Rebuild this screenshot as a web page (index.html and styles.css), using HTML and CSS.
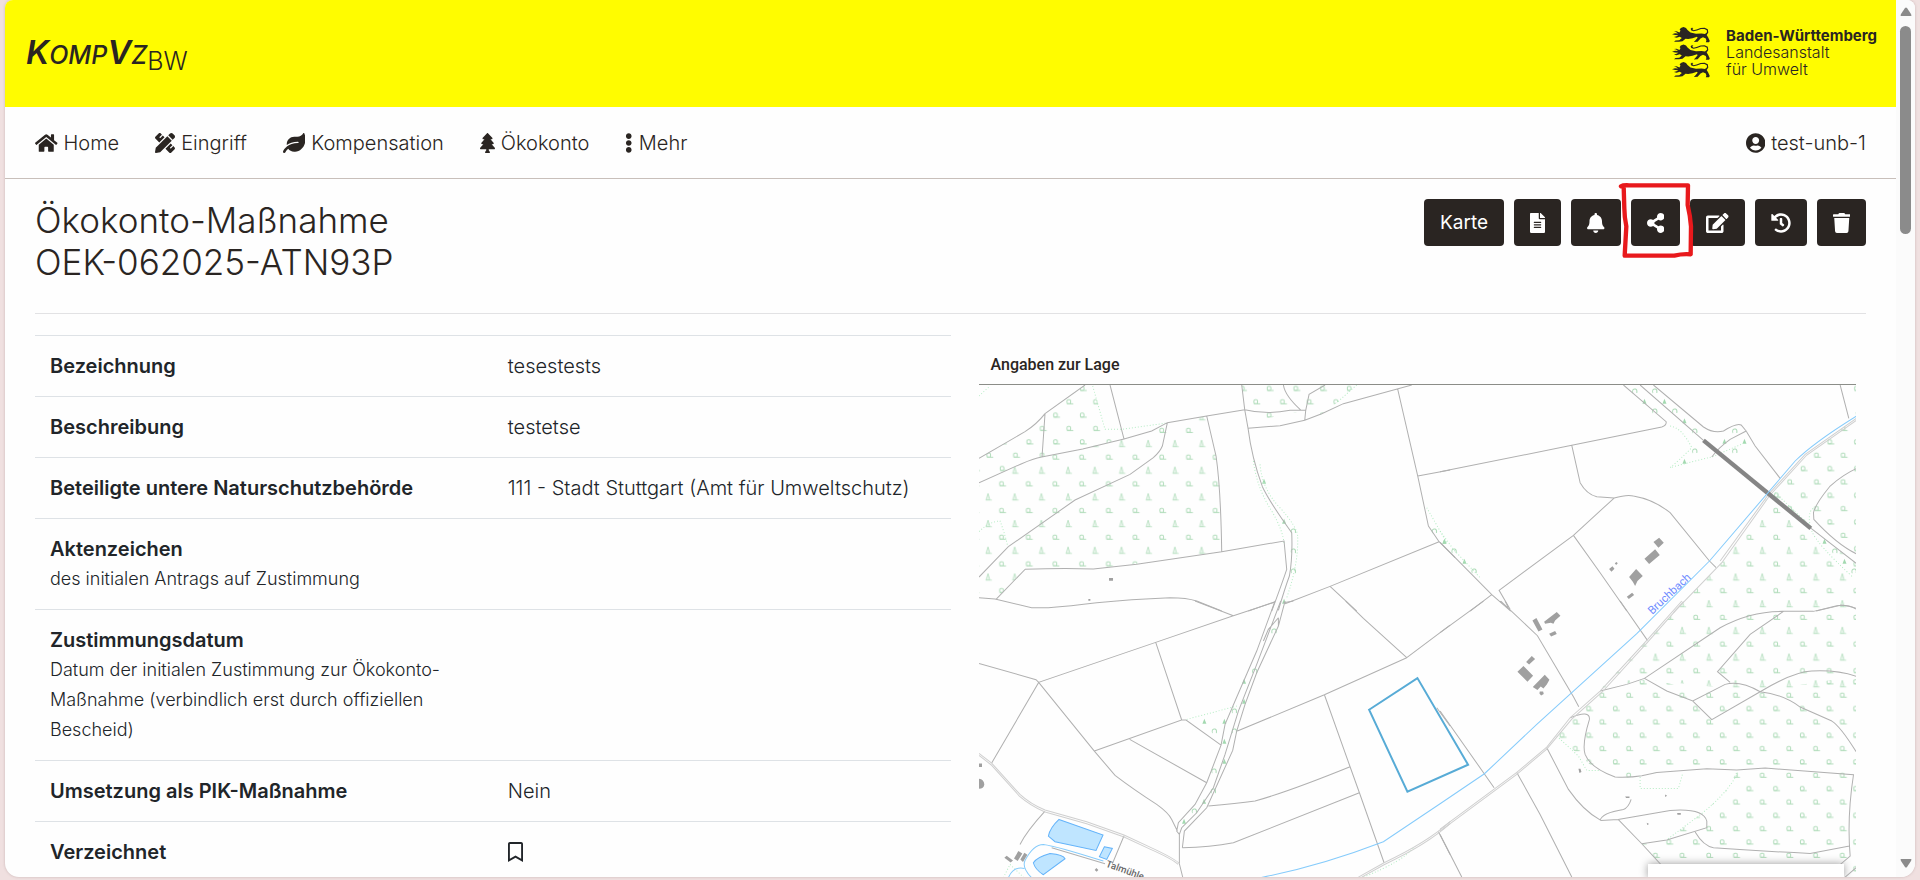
FILE: index.html
```html
<!DOCTYPE html>
<html lang="de">
<head>
<meta charset="utf-8">
<meta name="viewport" content="width=device-width, initial-scale=1">
<title>KompVzBW – Ökokonto-Maßnahme</title>
<link rel="stylesheet" href="styles.css">
</head>
<body>
<div class="frame">
  <div class="page">
    <header class="brand-bar">
      <a class="brand" href="#"><span class="brand-name">K<span class="caps">omp</span>V<span class="caps">z</span></span><span class="brand-sub">BW</span></a>
      <a class="agency" href="#">
        <svg class="lions" viewBox="0 0 38 51" aria-hidden="true">
          <defs>
            <path id="lion" d="M0 7.200 3 6.200 6 6.600 4 5 2 4.600 4.500 4.200 7.500 5.400 8.500 3.600 7.600 2.800 8.800 1 11.500 0 14 .9 15.500 3 18.500 5.600 24 6.800 29.500 6.500 33 7 35 5.200 34.800 3.200 32.500 2 29 2 25 3.600 21.600 4.300 19.300 3.500 18.600 1.700 19.800 .7 21.400 .9 20.300 2 21.500 3.200 24.500 2.600 28.500 1 32.600.8 35.800 2.300 36.300 5.500 34.700 8 36.200 10.500 37.800 14 37 15.300 33.800 15.200 34.400 13.600 33.800 11.500 31 10.200 28.500 11.600 25.600 14.800 21.800 15 23.300 13.400 25.600 10.800 25 9.800 20.500 11.200 16.200 12 13.500 11.800 10.500 14.300 7 14.800 2 14.800 3.500 13.500 7.300 13.200 9.800 11 7.800 9.700 4.500 10.700 2 9.900 4.500 9.200 6.400 8.300 3.200 8Z"/>
          </defs>
          <use href="#lion"/><use href="#lion" y="17.500"/><use href="#lion" y="35"/>
        </svg>
        <span class="agency-text"><strong>Baden-Württemberg</strong><br>Landesanstalt<br>für Umwelt</span>
      </a>
    </header>

    <nav class="nav">
      <a class="nav-item" href="#"><svg class="icon" viewBox="0 0 576 512"><path d="M280.370 148.260L96 300.110V464a16 16 0 0 0 16 16l112.060-.29a16 16 0 0 0 15.920-16V368a16 16 0 0 1 16-16h64a16 16 0 0 1 16 16v95.640a16 16 0 0 0 16 16.050L464 480a16 16 0 0 0 16-16V300L295.670 148.260a12.190 12.190 0 0 0-15.300 0zM571.600 251.470L488 182.560V44.050a12 12 0 0 0-12-12h-56a12 12 0 0 0-12 12v72.610L318.470 43a48 48 0 0 0-61 0L4.340 251.470a12 12 0 0 0-1.600 16.900l25.500 31A12 12 0 0 0 45.150 301l235.220-193.740a12.190 12.190 0 0 1 15.300 0L530.900 301a12 12 0 0 0 16.900-1.600l25.500-31a12 12 0 0 0-1.700-16.930z"/></svg>Home</a>
      <a class="nav-item" href="#"><svg class="icon" viewBox="0 0 512 512"><path d="M109.460 244.040l134.580-134.560-44.120-44.120-61.680 61.680a7.919 7.919 0 0 1-11.210 0l-11.210-11.210c-3.100-3.100-3.100-8.120 0-11.210l61.680-61.680-33.640-33.650C131.470-3.100 111.390-3.100 99 9.290L9.290 99c-12.380 12.390-12.390 32.470 0 44.860l100.170 100.180zm388.470-116.800c18.760-18.760 18.750-49.170 0-67.930l-45.250-45.250c-18.760-18.760-49.180-18.760-67.950 0l-46.020 46.010 113.200 113.200 46.020-46.030zM316.080 82.710l-297 296.960L.32 487.110c-2.530 14.490 10.090 27.110 24.590 24.560l107.450-18.840L429.280 195.900 316.080 82.710zm186.630 285.430l-33.640-33.640-61.680 61.680c-3.100 3.100-8.120 3.100-11.210 0l-11.210-11.210c-3.090-3.100-3.090-8.120 0-11.210l61.680-61.680-44.140-44.140L267.930 402.500l100.210 100.200c12.390 12.390 32.470 12.390 44.860 0l89.710-89.700c12.390-12.390 12.390-32.470 0-44.860z"/></svg>Eingriff</a>
      <a class="nav-item" href="#"><svg class="icon" viewBox="0 0 576 512"><path d="M546.200 9.700c-5.600-12.500-21.600-13-28.300-1.200C486.900 62.400 431.400 96 368 96h-80C182 96 96 182 96 288c0 7 .8 13.700 1.500 20.500C161.300 262.800 253.400 224 384 224c8.800 0 16 7.200 16 16s-7.200 16-16 16C132.600 256 26 410.100 2.400 468c-6.600 16.300 1.200 34.900 17.500 41.600 16.400 6.800 35-1.100 41.800-17.300 1.500-3.600 20.900-47.900 71.900-90.600 32.400 43.900 94 85.800 174.900 77.200C465.500 467.500 576 326.700 576 154.300c0-50.200-10.800-102.200-29.800-144.600z"/></svg>Kompensation</a>
      <a class="nav-item" href="#"><svg class="icon" viewBox="0 0 384 512"><path d="M378.310 378.490L298.420 288h30.630c9.010 0 16.980-5 20.780-13.060 3.800-8.040 2.550-17.260-3.280-24.050L268.420 160h28.890c9.100 0 17.300-5.350 20.860-13.610 3.520-8.130 1.860-17.590-4.240-24.080L203.660 4.830c-6.030-6.450-17.280-6.450-23.320 0L70.060 122.310c-6.100 6.490-7.750 15.950-4.240 24.080C69.380 154.650 77.590 160 86.690 160h28.890l-78.140 90.910c-5.810 6.780-7.060 15.990-3.270 24.040C37.970 283 45.930 288 54.950 288h30.630L5.690 378.490c-6 6.790-7.360 16.090-3.560 24.260 3.750 8.050 12 13.250 21.010 13.250H160v24.450l-30.290 48.400c-5.320 10.640 2.420 23.160 14.310 23.160h95.960c11.890 0 19.630-12.520 14.310-23.160L224 440.450V416h136.860c9.010 0 17.260-5.200 21.010-13.250 3.800-8.170 2.440-17.470-3.560-24.260z"/></svg>Ökokonto</a>
      <a class="nav-item" href="#"><svg class="icon" viewBox="0 0 192 512"><path d="M96 184c39.800 0 72 32.200 72 72s-32.200 72-72 72-72-32.200-72-72 32.200-72 72-72zM24 80c0 39.800 32.200 72 72 72s72-32.200 72-72S135.800 8 96 8 24 40.200 24 80zm0 352c0 39.800 32.200 72 72 72s72-32.200 72-72-32.200-72-72-72-72 32.200-72 72z"/></svg>Mehr</a>
      <a class="nav-item nav-user" href="#"><svg class="icon" viewBox="0 0 496 512"><path d="M248 8C111 8 0 119 0 256s111 248 248 248 248-111 248-248S385 8 248 8zm0 96c48.600 0 88 39.400 88 88s-39.400 88-88 88-88-39.400-88-88 39.400-88 88-88zm0 344c-58.700 0-111.300-26.600-146.500-68.200 18.800-35.400 55.600-59.800 98.500-59.800 2.400 0 4.800.4 7.100 1.100 13 4.200 26.600 6.900 40.900 6.900 14.300 0 28-2.700 40.900-6.900 2.300-.7 4.700-1.100 7.100-1.100 42.900 0 79.700 24.400 98.500 59.800C359.300 421.400 306.700 448 248 448z"/></svg>test-unb-1</a>
    </nav>

    <main class="content">
      <div class="title-row">
        <h1 class="title">Ökokonto-Maßnahme<br>OEK-062025-ATN93P</h1>
        <div class="actions">
          <button class="btn" type="button">Karte</button>
          <button class="btn" type="button" aria-label="Bericht"><svg class="icon" viewBox="0 0 384 512"><path d="M224 136V0H24C10.700 0 0 10.700 0 24v464c0 13.300 10.700 24 24 24h336c13.300 0 24-10.700 24-24V160H248c-13.200 0-24-10.800-24-24zm64 236c0 6.600-5.400 12-12 12H108c-6.600 0-12-5.400-12-12v-8c0-6.600 5.400-12 12-12h168c6.600 0 12 5.400 12 12v8zm0-64c0 6.600-5.400 12-12 12H108c-6.600 0-12-5.400-12-12v-8c0-6.600 5.400-12 12-12h168c6.600 0 12 5.400 12 12v8zm0-72v8c0 6.600-5.400 12-12 12H108c-6.600 0-12-5.400-12-12v-8c0-6.600 5.400-12 12-12h168c6.600 0 12 5.400 12 12zm96-114.100v6.100H256V0h6.100c6.400 0 12.500 2.500 17 7l97.900 98c4.500 4.500 7 10.600 7 16.900z"/></svg></button>
          <button class="btn" type="button" aria-label="Abonnieren"><svg class="icon" viewBox="0 0 448 512"><path d="M224 512c35.320 0 63.970-28.650 63.970-64H160.030c0 35.350 28.650 64 63.970 64zm215.390-149.710c-19.320-20.760-55.470-51.990-55.470-154.290 0-77.700-54.480-139.900-127.940-155.160V32c0-17.670-14.320-32-31.980-32s-31.980 14.330-31.980 32v20.840C118.560 68.100 64.080 130.300 64.080 208c0 102.300-36.150 133.530-55.470 154.290-6 6.450-8.660 14.160-8.610 21.710.11 16.400 12.980 32 32.100 32h383.800c19.120 0 32-15.600 32.100-32 .05-7.550-2.610-15.270-8.610-21.710z"/></svg></button>
          <div class="marked">
            <button class="btn" type="button" aria-label="Teilen"><svg class="icon" viewBox="0 0 448 512"><path d="M352 320c-22.608 0-43.387 7.819-59.790 20.895l-102.486-64.054a96.551 96.551 0 0 0 0-41.683l102.486-64.054C308.613 184.181 329.392 192 352 192c53.019 0 96-42.981 96-96S405.019 0 352 0s-96 42.981-96 96c0 7.158.79 14.130 2.276 20.841L155.790 180.895C139.387 167.819 118.608 160 96 160c-53.019 0-96 42.981-96 96s42.981 96 96 96c22.608 0 43.387-7.819 59.790-20.895l102.486 64.054A96.301 96.301 0 0 0 256 416c0 53.019 42.981 96 96 96s96-42.981 96-96-42.981-96-96-96z"/></svg></button>
            <svg class="mark" viewBox="0 0 216 228" aria-hidden="true"><path d="M6 10Q12 6 30 7H207L206 66Q214 100 216 130L215 214Q190 212 166 218H17L22 130Q16 100 16 76L14 10"/></svg>
          </div>
          <button class="btn" type="button" aria-label="Bearbeiten"><svg class="icon" viewBox="0 0 576 512"><path d="M402.600 83.200l90.200 90.200c3.800 3.800 3.800 10 0 13.800L274.400 405.600l-92.800 10.300c-12.400 1.400-22.900-9.100-21.500-21.500l10.300-92.800L388.800 83.200c3.800-3.800 10-3.800 13.800 0zm162-22.900l-48.800-48.800c-15.200-15.200-39.900-15.200-55.200 0l-35.400 35.400c-3.800 3.800-3.800 10 0 13.800l90.200 90.200c3.800 3.800 10 3.800 13.800 0l35.400-35.400c15.200-15.300 15.200-40 0-55.200zM384 346.200V448H64V128h229.800c3.200 0 6.200-1.300 8.500-3.500l40-40c7.600-7.600 2.200-20.500-8.500-20.500H48C21.500 64 0 85.500 0 112v352c0 26.500 21.500 48 48 48h352c26.500 0 48-21.500 48-48V306.200c0-10.700-12.900-16-20.500-8.500l-40 40c-2.200 2.300-3.500 5.300-3.500 8.500z"/></svg></button>
          <button class="btn" type="button" aria-label="Verlauf"><svg class="icon" viewBox="0 0 512 512"><path d="M504 255.531c.253 136.640-111.180 248.372-247.820 248.468-59.015.042-113.223-20.530-155.822-54.911-11.077-8.940-11.905-25.541-1.839-35.607l11.267-11.267c8.609-8.609 22.353-9.551 31.891-1.984C173.062 425.135 212.781 440 256 440c101.705 0 184-82.311 184-184 0-101.705-82.311-184-184-184-48.814 0-93.149 18.969-126.068 49.932l50.754 50.754c10.080 10.080 2.941 27.314-11.313 27.314H24c-8.837 0-16-7.163-16-16V38.627c0-14.254 17.234-21.393 27.314-11.314l49.372 49.372C129.209 34.136 189.552 8 256 8c136.810 0 247.747 110.780 248 247.531zm-180.912 78.784l9.823-12.630c8.138-10.463 6.253-25.542-4.210-33.679L288 256.349V152c0-13.255-10.745-24-24-24h-16c-13.255 0-24 10.745-24 24v135.651l65.409 50.874c10.463 8.137 25.541 6.253 33.679-4.210z"/></svg></button>
          <button class="btn" type="button" aria-label="Löschen"><svg class="icon" viewBox="0 0 448 512"><path d="M432 32H312l-9.400-18.700A24 24 0 0 0 281.100 0H166.800a23.720 23.720 0 0 0-21.400 13.300L136 32H16A16 16 0 0 0 0 48v32a16 16 0 0 0 16 16h416a16 16 0 0 0 16-16V48a16 16 0 0 0-16-16zM53.200 467a48 48 0 0 0 47.900 45h245.800a48 48 0 0 0 47.900-45L416 128H32z"/></svg></button>
        </div>
      </div>

      <div class="columns">
        <table class="details">
          <tbody>
            <tr><th scope="row">Bezeichnung</th><td>tesestests</td></tr>
            <tr><th scope="row">Beschreibung</th><td>testetse</td></tr>
            <tr><th scope="row">Beteiligte untere Naturschutzbehörde</th><td>111 - Stadt Stuttgart (Amt für Umweltschutz)</td></tr>
            <tr><th scope="row">Aktenzeichen<small>des initialen Antrags auf Zustimmung</small></th><td></td></tr>
            <tr><th scope="row">Zustimmungsdatum<small>Datum der initialen Zustimmung zur Ökokonto-Maßnahme (verbindlich erst durch offiziellen Bescheid)</small></th><td></td></tr>
            <tr><th scope="row">Umsetzung als PIK-Maßnahme</th><td>Nein</td></tr>
            <tr><th scope="row">Verzeichnet</th><td><svg class="icon" viewBox="0 0 384 512"><path d="M336 0H48C21.490 0 0 21.490 0 48v464l192-112 192 112V48c0-26.510-21.490-48-48-48zm0 428.430l-144-84-144 84V54a6 6 0 0 1 6-6h276c3.314 0 6 2.683 6 5.996V428.430z"/></svg></td></tr>
          </tbody>
        </table>

        <section class="location">
          <h2 class="location-title">Angaben zur Lage</h2>
          <div class="map">
            <svg class="map-canvas" viewBox="27 162 2632 1480" role="img" aria-label="Karte">
              <defs>
                <g id="leafy"><rect x="-7" y="-6" width="11" height="12" rx="4"/><path d="M-7 6.500H12"/></g>
                <g id="conifer"><path d="M-6 8 0-11 6 8ZM0-8V6"/><path d="M-7 9H12"/></g>
                <g id="arch"><path d="M-5 6Q-8 5-6-3-3-7 2-6 8-4 6 6"/></g>
                <path id="spruce" d="M-6 6 0-9 6 6Z"/>
                <pattern id="mixed" patternUnits="userSpaceOnUse" x="33" y="398" width="80.080" height="80.080"><use href="#leafy" x="63" y="60"/><use href="#conifer" x="21" y="20"/></pattern>
                <pattern id="leafN" patternUnits="userSpaceOnUse" x="318" y="152" width="80.080" height="80.080"><use href="#leafy" x="20" y="20"/><use href="#leafy" x="60" y="60"/></pattern>
                <pattern id="leafS" patternUnits="userSpaceOnUse" x="1837" y="1112" width="80.080" height="80.080"><use href="#leafy" x="20" y="20"/><use href="#leafy" x="60" y="60"/></pattern>
              </defs>

              <g>
                <path fill="url(#leafN)" d="M345 162H368L405 295 455 300 462 324 338 352 215 378 155 398 27 455V382L165 302 225 248Z"/>
                <path fill="url(#mixed)" d="M462 324 592 275 710 255 738 375 754 490 755 662 500 698 370 714 165 715 78 805 27 800V455L155 398 215 378 338 352Z"/>
                <path fill="url(#leafN)" d="M815 162H1160L1100 215 1055 250 1005 268 1007 238 950 250 890 262 824 236Z"/>
                <path fill="url(#leafN)" d="M2640 162H2659V690L2522 590 2400 485 2510 362 2659 262Z"/>
                <path fill="url(#mixed)" d="M2395 492 2522 590 2659 697V1072L2370 1078 2170 1062 2030 1044 1890 1076 2030 928 2130 825 2260 690Z"/>
                <path fill="url(#leafS)" d="M1890 1078 2030 1044 2170 1072 2370 1080 2659 1035V1641H2610L2610 1602H2075L2015 1538 2090 1528 2185 1455 2260 1390 2303 1317 2210 1313 2060 1324 1970 1340 1935 1338 1860 1300 1760 1215 1800 1150Z"/>
              </g>

              <g class="symbols">
                <g transform="translate(1410 0)">
                  <use href="#arch" x="584" y="180"/><use href="#arch" x="644" y="180"/><use href="#arch" x="644" y="240"/><use href="#arch" x="704" y="240"/><use href="#arch" x="764" y="300"/><use href="#arch" x="884" y="300"/><use href="#arch" x="764" y="360"/><use href="#arch" x="884" y="360"/><use href="#arch" x="1184" y="660"/><use href="#arch" x="1242" y="720"/><use href="#arch" x="42" y="660"/><use href="#arch" x="102" y="720"/>
                  <use href="#spruce" x="613" y="212"/><use href="#spruce" x="673" y="212"/><use href="#spruce" x="733" y="271"/><use href="#spruce" x="853" y="332"/><use href="#spruce" x="913" y="332"/><use href="#spruce" x="733" y="392"/><use href="#spruce" x="1153" y="632"/><use href="#spruce" x="1213" y="692"/><use href="#spruce" x="13" y="632"/><use href="#spruce" x="73" y="692"/>
                </g>
                <use href="#arch" x="970" y="600"/><use href="#arch" x="970" y="660"/><use href="#arch" x="970" y="720"/><use href="#arch" x="1393" y="600"/><use href="#spruce" x="942" y="572"/><use href="#spruce" x="882" y="452"/><use href="#spruce" x="942" y="812"/><use href="#spruce" x="1423" y="632"/>
                <g transform="translate(0 810)">
                  <use href="#arch" x="912" y="90"/><use href="#arch" x="854" y="210"/><use href="#arch" x="793" y="330"/><use href="#arch" x="793" y="390"/><use href="#arch" x="733" y="390"/><use href="#arch" x="732" y="510"/><use href="#arch" x="730" y="570"/><use href="#arch" x="673" y="630"/>
                  <use href="#spruce" x="822" y="242"/><use href="#spruce" x="822" y="302"/><use href="#spruce" x="703" y="362"/><use href="#spruce" x="763" y="362"/><use href="#spruce" x="763" y="422"/><use href="#spruce" x="763" y="482"/><use href="#spruce" x="702" y="602"/><use href="#spruce" x="642" y="662"/>
                </g>
              </g>

              <g class="dotted">
                <path d="M27 195 60 165M368 165 405 295H455L590 276M27 602Q60 570 90 570 102 600 113 645M850 390Q860 470 905 540 940 600 942 640M870 400Q875 470 925 525 985 590 983 620 985 700 950 800M1160 162 1100 215M1370 530 1430 635"/>
                <path transform="translate(1410 0)" d="M690 285Q725 290 755 350 720 385 690 410 760 390 815 378L915 335M1005 485 1110 585Q1100 530 1130 530M1115 600Q1130 640 1240 740M0 600 40 655 120 740"/>
                <path transform="translate(0 810)" d="M650 355 800 315M100 830 120 790 160 828M1180 828Q1300 780 1330 740"/>
                <path transform="translate(1410 810)" d="M350 405 415 465 440 508H480M600 528V562H715L728 516M893 515Q860 580 775 645L680 716"/>
              </g>

              <g class="parcels">
                <path d="M345 162 225 248Q200 280 165 302L27 382M225 248 216 378M420 162 462 324M27 455 155 398Q190 383 215 378L338 354 462 324 545 300 592 275 710 255 824 236Q890 252 960 238L1007 238 1004 268M592 275 577 345Q570 362 550 380L480 430 315 507 115 647 27 738M710 255 738 375Q752 470 755 662M78 805 165 715Q280 710 370 714L500 700 755 662 942 630 950 715Q935 760 905 840M27 800 75 804 185 830H235Q300 825 380 815 480 805 600 800 650 800 680 810L755 840M815 162 824 236 834 292Q845 380 877 467 900 515 965 605 968 680 958 735 945 770 925 838M834 292 930 284 1004 268 1055 248 1120 218 1325 162M940 162Q945 195 993 238M1065 162 1017 190 1007 238M1283 175 1343 435 1375 585 1407 632 1455 680M1343 435 1440 417M835 840 915 812M945 818 1080 766 1407 632M1080 766 1160 840"/>
                <path transform="translate(1410 0)" d="M0 422 395 343 665 288Q680 283 678 272L600 205 550 162M600 162 790 328M640 162 790 288Q820 308 850 300 890 275 903 282L918 300 870 325Q835 350 815 378M918 300 945 345 1020 442M395 343 420 455Q440 490 470 497L522 501Q560 490 580 495 640 505 690 545L808 690 828 710M522 501 400 613 177 778 210 835M400 613 480 725 560 840M90 840 155 791M0 634 155 791 212 840M1110 590 1248 697M1200 162 1226 262M1248 413Q1210 430 1170 465 1125 520 1120 545L1121 565Q1190 640 1248 668M1128 840 1200 823Q1225 822 1248 834"/>
                <path transform="translate(0 810)" d="M675 0 790 44 557 124 206 244 65 486M790 44 915 3M27 187 198 236 206 244 373 450 435 523Q490 565 560 610 595 635 605 655L622 690M557 124 635 357 373 450M635 357H648L753 432M479 415 710 545M940 5 970 0M1127 0 1180 52 1310 170 1440 72M1310 170 1063 281 802 390M1063 281 1140 497 1168 575 1242 785M1140 497Q960 570 855 600 800 608 715 615M1168 575 790 725Q720 738 637 740M915 0 860 150 795 300 765 370 753 432 710 545 675 610 625 665 620 690 628 700V788L638 828M932 0 860 190 805 330 765 460 730 560 680 635 635 680 628 700M945 0 925 75 860 215 825 310 800 390 788 448 710 620 643 690 637 740M925 50V75M880 120 895 85 925 50M225 630Q170 690 150 730M462 704 427 788M245 740 405 788M1405 692 1440 760M1400 320 1440 375"/>
                <path transform="translate(1410 810)" d="M130 0 0 95M180 0 205 22M195 0 205 20M182 0 292 104 400 287 416 317M540 0 622 118M0 330 162 560M230 514 300 640 395 828M320 440 385 565Q430 630 482 658L534 655 690 628Q790 620 800 660V680L680 717 605 728M534 655 605 728 664 792M0 700 65 828M480 270 560 250 613 232 840 80Q930 30 1030 31H1120L1190 14Q1220 10 1248 22M1030 31 930 100 832 212 870 244M613 232 680 270 758 300 855 250Q900 238 960 272 1030 280 1080 318L1175 360Q1200 375 1248 452M758 300 815 356 960 272Q1060 212 1115 210 1190 206 1248 226M390 350Q450 325 448 355 425 430 435 460 450 500 525 528 570 530 605 524L650 514 800 503 890 507 975 501 1240 521Q1220 650 1230 765L1198 792M1215 828 1248 800M765 693Q790 735 820 740 960 750 1110 757L1228 735M480 658Q485 635 550 625 565 620 573 595"/>
              </g>
              <g class="tracks">
                <path d="M2659 268 2510 372 2400 492 2255 695 2110 845M2659 262 2505 370 2395 490 2250 690"/>
                <path transform="translate(0 810)" d="M27 457 65 486 150 580Q180 608 225 627L350 662 462 702 540 738Q620 775 628 788M27 463 63 491 148 585Q180 613 225 633L350 668 462 708 540 744Q610 775 624 790M1165 828 1242 785Q1370 725 1440 662M1175 828 1242 791Q1370 731 1440 668"/>
                <path transform="translate(1410 810)" d="M0 684 230 514 320 438 390 350 480 270 622 116 725 0M0 690 230 520 320 444 395 354 487 272 622 124 730 2"/>
              </g>
              <path class="road" d="M2200 328 2522 592"/>

              <g class="water">
                <path d="M2659 255Q2530 335 2475 390L2218 690 2000 908 1700 1180 1543 1328 1410 1418 1240 1532Q1050 1605 870 1640"/>
                <path d="M115 1640Q130 1605 163 1612M185 1640Q155 1610 165 1588 190 1540 220 1540 260 1545 400 1590"/>
                <path class="pond" d="M267 1465 399 1512 378 1558 255 1532 235 1515Q240 1490 267 1465ZM403 1547 427 1552 410 1585 388 1577ZM190 1595Q200 1578 240 1567 280 1570 285 1583L220 1631Q195 1615 190 1595Z"/>
              </g>

              <g class="buildings">
                <path d="M2050 633 2067 620 2081 635 2065 650ZM2023 683 2055 655 2069 672 2037 699ZM1977 738 1998 714 2018 735 2002 750 1995 765 1988 752ZM1970 797 1986 785 1992 792 1976 804ZM1917 714 1927 706 1933 713 1924 722ZM1934 697 1939 693 1943 697 1938 702Z"/>
                <path transform="translate(1410 810)" d="M277 58 289 51 307 85 295 91ZM312 62 350 33 361 44 345 58 340 68 332 65 315 68ZM327 98 345 90 350 99 333 106ZM258 183 275 165 285 174 267 190ZM232 212 250 195 279 224 262 242ZM278 258 314 221 328 236 320 250 310 262 302 256 292 267ZM299 271H309L311 279 303 283 298 277ZM415 503H421L424 513 418 516ZM555 586H568V591H558ZM675 580 681 584 675 588ZM711 636H722V641H712ZM620 665 627 669 621 672Z"/>
                <path d="M417 741H429V749H417ZM355 804H361V809H355ZM27 1297H36V1308H27ZM27 1343Q42 1345 43 1360 41 1373 27 1373ZM103 1580 110 1574 129 1588 122 1594ZM132 1582 145 1560 157 1567 143 1590ZM151 1585 163 1565 172 1571 159 1593ZM374 1617 379 1611 385 1617 380 1622Z"/>
              </g>
              <path class="plot" d="M1197 1136 1342 1041 1494 1301 1312 1382Z"/>
              <text class="river-name" transform="translate(2046 852) rotate(-43)">Bruchbach</text>
              <text class="place-name" transform="translate(406 1606) rotate(20)">Talmühle</text>
            </svg>
            <div class="map-panel"></div>
          </div>
        </section>
      </div>
    </main>
  </div>
  <div class="scrollbar" aria-hidden="true">
    <svg class="arrow" viewBox="0 0 12 10"><path d="M1 9Q0 9 1 7L5 1Q6 0 7 1L11 7Q12 9 11 9Z"/></svg>
    <div class="thumb"></div>
    <svg class="arrow arrow-down" viewBox="0 0 12 10"><path d="M1 1Q0 1 1 3L5 9Q6 10 7 9L11 3Q12 1 11 1Z"/></svg>
  </div>
</div>
</body>
</html>
```
FILE: styles.css
```css
* { box-sizing: border-box; }

body {
  margin: 0;
  height: 100vh;
  padding: 0 5px 3px;
  overflow: hidden;
  background: #f0e0e0;
  color: #2a2522;
  font: 300 20px/30px Inter, "Liberation Sans", sans-serif;
}

a { color: inherit; text-decoration: none; }

.icon { height: 20px; width: auto; fill: currentColor; flex: none; }

.frame {
  display: flex;
  height: 100%;
  overflow: hidden;
  background: #fefefe;
  border-radius: 8px 8px 14px 14px;
  box-shadow: 0 0 3px #c9b5b5;
}

.page { flex: 1; min-width: 0; overflow: hidden; }

/* Header */
.brand-bar {
  display: flex;
  justify-content: space-between;
  align-items: center;
  height: 107px;
  padding: 0 19px 2px 21px;
  background: #fffc00;
}

.brand { padding-top: 8px; line-height: 40px; }
.brand-name { font-size: 33px; font-style: italic; font-weight: 600; }
.caps { font-size: 25px; font-weight: 500; text-transform: uppercase; }
.brand-sub { font-size: 25px; vertical-align: -6px; }

.agency { display: flex; align-items: center; gap: 16px; }
.lions { width: 38px; height: 51px; fill: #2a2522; }
.agency-text { font-size: 16px; line-height: 17px; }
.agency-text strong { font-size: 15px; font-weight: 700; }

/* Navigation */
.nav {
  display: flex;
  align-items: center;
  gap: 36px;
  height: 72px;
  padding: 0 30px;
  border-bottom: 1px solid #c8bfba;
}
.nav-item { display: flex; align-items: center; gap: 6px; }
.nav-user { margin-left: auto; }

/* Title and actions */
.content { padding: 0 30px; }
.title-row {
  display: flex;
  justify-content: space-between;
  align-items: flex-start;
  padding: 20px 0 30px;
  border-bottom: 1px solid #e2e2e4;
}
.title { margin: 0; font-size: 35px; line-height: 42px; font-weight: 300; }

.actions { display: flex; gap: 10px; }
.btn {
  display: flex;
  align-items: center;
  height: 47px;
  padding: 0 16px;
  border: 0;
  border-radius: 4px;
  background: #2a2522;
  color: #fff;
  font: 400 19px/30px Inter, sans-serif;
}
.marked { position: relative; }
.mark {
  position: absolute;
  z-index: 1;
  left: -12px;
  top: -16px;
  width: 72px;
  height: 76px;
  overflow: visible;
  fill: none;
  stroke: #e8191c;
  stroke-width: 13px;
  stroke-linecap: round;
  stroke-linejoin: round;
  pointer-events: none;
}

/* Details */
.columns {
  display: grid;
  grid-template-columns: 1fr 1fr;
  align-items: start;
  padding-top: 21px;
}
.details { width: 100%; table-layout: fixed; border-collapse: collapse; color: #212529; }
.details th, .details td {
  width: 50%;
  padding: 15px;
  border-top: 1px solid #dee2e6;
  text-align: left;
  vertical-align: top;
  height: 61px;
}
.details th { font-weight: 600; }
.details td .icon { display: block; margin-top: 5px; }
.details small { display: block; font-size: 18px; font-weight: 300; }

/* Map */
.location { padding: 15px 10px 0 28px; }
.location-title {
  margin: 0;
  padding: 0 12px 4px;
  font: 500 16px/30px Roboto, sans-serif;
}
.map { position: relative; overflow: hidden; border-top: 1px solid #8b8d88; }
.map-canvas { display: block; width: 100%; height: auto; }
.map-panel {
  position: absolute;
  right: 12px;
  bottom: 0;
  width: 196px;
  height: 14px;
  background: #fff;
  box-shadow: 0 0 8px #999;
}

#leafy, #arch { fill: none; stroke: #b0dcba; stroke-width: 3px; }
#conifer { fill: none; stroke: #b0dcba; stroke-width: 2px; }
#spruce { fill: #a3d9b0; }
.dotted { fill: none; stroke: #b5ecc4; stroke-width: 3px; stroke-dasharray: 3 6; }
.parcels { fill: none; stroke: #b0b0b0; stroke-width: 3px; }
.tracks { fill: none; stroke: #cfcfcf; stroke-width: 3px; }
.road { stroke: #858585; stroke-width: 13px; }
.water { fill: none; stroke: #85cbfb; stroke-width: 3px; }
.pond { fill: #bfe5ff; stroke: #63b3fa; }
.buildings { fill: #a0a0a0; }
.plot { fill: none; stroke: #57abd6; stroke-width: 6px; }
.river-name { font: 400 34px Roboto, sans-serif; fill: #6f8cff; }
.place-name { font: 500 29px Roboto, sans-serif; fill: #666; }

/* Scrollbar */
.scrollbar {
  display: flex;
  flex-direction: column;
  align-items: center;
  width: 19px;
  padding: 7px 0 9px;
  background: #fbfbfb;
}
.arrow { width: 12px; height: 10px; fill: #8b8b8b; }
.arrow-down { margin-top: auto; }
.thumb { width: 11px; height: 208px; margin-top: 9px; border-radius: 6px; background: #8b8b8b; }
```
